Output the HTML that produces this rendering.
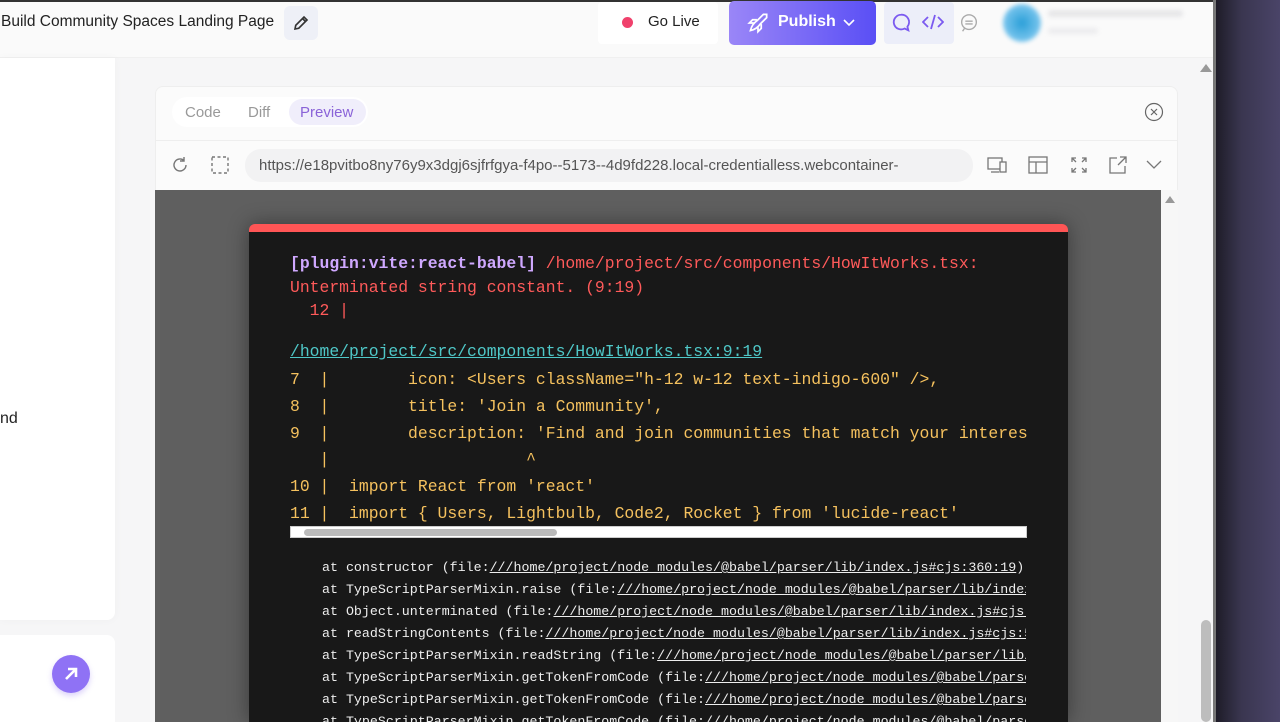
<!DOCTYPE html>
<html><head><meta charset="utf-8"><style>
*{box-sizing:border-box;margin:0;padding:0}
html,body{width:1280px;height:722px;overflow:hidden}
body{background:#f6f6f7;font-family:"Liberation Sans",sans-serif;position:relative}
.abs{position:absolute}
.mono{font-family:"Liberation Mono",monospace;white-space:pre;position:absolute}
u{text-decoration:underline}
</style></head><body>
<!-- top bar -->
<div class="abs" style="left:0;top:0;width:1215px;height:58px;background:#fafafa;border-bottom:1px solid #f0f0f0"></div>
<div class="abs" style="left:0;top:0;width:1215px;height:2px;background:#333"></div>
<div class="abs" style="left:1px;top:13px;font-size:15.5px;color:#222">Build Community Spaces Landing Page</div>
<div class="abs" style="left:284px;top:6px;width:34px;height:34px;border-radius:6px;background:#eef0f7"></div>
<svg class="abs" style="left:292px;top:14px" width="18" height="18" viewBox="0 0 24 24" fill="none" stroke="#333" stroke-width="2.2"><path d="M4 20l1-5L16 4l4 4L9 19z M14 6l4 4"/></svg>
<div class="abs" style="left:598px;top:2px;width:120px;height:42px;background:#fff;border-radius:4px"></div>
<div class="abs" style="left:622px;top:17px;width:11px;height:11px;border-radius:50%;background:#f0416c"></div>
<div class="abs" style="left:648px;top:13px;font-size:15px;color:#222">Go Live</div>
<div class="abs" style="left:729px;top:1px;width:147px;height:44px;border-radius:5px;background:linear-gradient(90deg,#9a86f7,#5a4ff5)"></div>
<svg class="abs" style="left:745px;top:10px" width="26" height="26" viewBox="0 0 24 24" fill="none" stroke="#fff" stroke-width="1.6"><path d="M5 19c1-4 3-7 6-9l6-6 3 0 0 3-6 6c-2 3-5 5-9 6zM8 12l-4 0 3-3 4 0M12 16l0 4 3-3 0-4"/></svg>
<div class="abs" style="left:778px;top:13px;font-size:16px;color:#fff;font-weight:bold">Publish</div>
<svg class="abs" style="left:842px;top:18px" width="14" height="10" viewBox="0 0 14 10" fill="none" stroke="#fff" stroke-width="1.6"><path d="M2 2l5 5 5-5"/></svg>
<div class="abs" style="left:884px;top:2px;width:70px;height:42px;background:#eceef9;border-radius:4px"></div>
<svg class="abs" style="left:890px;top:12px" width="22" height="22" viewBox="0 0 24 24" fill="none" stroke="#7b5af0" stroke-width="2"><path d="M12 3a8 8 0 1 0 4 15l4 2-1-4A8 8 0 0 0 12 3z"/></svg>
<svg class="abs" style="left:922px;top:13px" width="22" height="18" viewBox="0 0 22 18" fill="none" stroke="#7b5af0" stroke-width="1.8"><path d="M6 4L1 9l5 5M16 4l5 5-5 5M13 2L9 16"/></svg>
<svg class="abs" style="left:958px;top:12px" width="22" height="22" viewBox="0 0 24 24" fill="none" stroke="#aaa" stroke-width="1.5"><circle cx="12" cy="11" r="8"/><path d="M8 10h8M8 13h8M7 18l-2 3"/></svg>
<div class="abs" style="left:1003px;top:4px;width:38px;height:38px;border-radius:50%;background:radial-gradient(#2a9fd8,#7cc6ee 70%,transparent 75%);filter:blur(2px)"></div>
<div class="abs" style="left:1048px;top:10px;width:135px;height:7px;background:#e6e6e8;border-radius:4px;filter:blur(2px)"></div>
<div class="abs" style="left:1048px;top:28px;width:50px;height:6px;background:#ececee;border-radius:4px;filter:blur(2px)"></div>
<!-- left cards -->
<div class="abs" style="left:0;top:58px;width:115px;height:562px;background:#fff;border-radius:0 0 8px 0;box-shadow:0 0 10px rgba(0,0,0,.03)"></div>
<div class="abs" style="left:0;top:410px;font-size:16px;color:#222">nd</div>
<div class="abs" style="left:0;top:635px;width:115px;height:90px;background:#fff;border-radius:0 8px 0 0"></div>
<div class="abs" style="left:52px;top:655px;width:38px;height:38px;border-radius:50%;background:#8f72f5;box-shadow:0 3px 6px rgba(140,110,240,.3)"></div>
<svg class="abs" style="left:61px;top:664px" width="20" height="20" viewBox="0 0 20 20" fill="none" stroke="#fff" stroke-width="2.6"><path d="M5 15L15 5M7 5h8v8"/></svg>
<!-- preview panel -->
<div class="abs" style="left:155px;top:86px;width:1023px;height:640px;background:#fbfbfb;border-radius:8px 8px 0 0;border:1px solid #eee"></div>
<div class="abs" style="left:172px;top:97px;width:196px;height:30px;background:#fff;border-radius:15px"></div>
<div class="abs" style="left:289px;top:99px;width:77px;height:26px;background:#f0eefb;border-radius:13px"></div>
<div class="abs" style="left:185px;top:104px;font-size:15px;color:#999">Code</div>
<div class="abs" style="left:248px;top:104px;font-size:15px;color:#999">Diff</div>
<div class="abs" style="left:300px;top:104px;font-size:15px;color:#8a63d8">Preview</div>
<svg class="abs" style="left:1144px;top:102px" width="20" height="20" viewBox="0 0 20 20" fill="none" stroke="#666" stroke-width="1.2"><circle cx="10" cy="10" r="8.5"/><path d="M7 7l6 6M13 7l-6 6"/></svg>
<div class="abs" style="left:156px;top:140px;width:1021px;height:1px;background:#eee"></div>
<svg class="abs" style="left:170px;top:155px" width="20" height="20" viewBox="0 0 20 20" fill="none" stroke="#777" stroke-width="1.4"><path d="M16 10a6 6 0 1 1-2-4.5M14 2v4h-4"/></svg>
<svg class="abs" style="left:211px;top:156px" width="18" height="18" viewBox="0 0 18 18" fill="none" stroke="#777" stroke-width="1.4" stroke-dasharray="3 2.5"><rect x="1" y="1" width="16" height="16"/></svg>
<div class="abs" style="left:245px;top:149px;width:728px;height:33px;background:#f2f2f3;border-radius:16px"></div>
<div class="abs" style="left:259px;top:157px;font-size:15px;color:#555;white-space:nowrap;width:712px;overflow:hidden">https://e18pvitbo8ny76y9x3dgj6sjfrfgya-f4po--5173--4d9fd228.local-credentialless.webcontainer-</div>
<svg class="abs" style="left:986px;top:155px" width="24" height="20" viewBox="0 0 24 20" fill="none" stroke="#777" stroke-width="1.3"><rect x="2" y="3" width="14" height="11"/><rect x="14" y="7" width="6" height="10" fill="#fbfbfb"/><path d="M5 17h8"/></svg>
<svg class="abs" style="left:1028px;top:156px" width="20" height="18" viewBox="0 0 20 18" fill="none" stroke="#777" stroke-width="1.3"><rect x="1" y="1" width="18" height="16"/><path d="M1 6h18M8 6v11"/></svg>
<svg class="abs" style="left:1070px;top:156px" width="18" height="18" viewBox="0 0 18 18" fill="none" stroke="#777" stroke-width="1.3"><path d="M2 6V2h4M2 2l4 4M16 6V2h-4M16 2l-4 4M2 12v4h4M2 16l4-4M16 12v4h-4M16 16l-4-4"/></svg>
<svg class="abs" style="left:1108px;top:155px" width="20" height="20" viewBox="0 0 20 20" fill="none" stroke="#777" stroke-width="1.3"><path d="M9 3H2v15h15v-7M12 2h6v6M18 2l-8 8"/></svg>
<svg class="abs" style="left:1146px;top:160px" width="16" height="10" viewBox="0 0 16 10" fill="none" stroke="#777" stroke-width="1.3"><path d="M1 1l7 7 7-7"/></svg>
<!-- iframe area -->
<div class="abs" style="left:155px;top:190px;width:1006px;height:532px;background:#5f5f5f"></div>
<div class="abs" style="left:1161px;top:190px;width:17px;height:532px;background:#f7f7f7"></div>
<div class="abs" style="left:1165px;top:196px;width:0;height:0;border-left:5px solid transparent;border-right:5px solid transparent;border-bottom:7px solid #999"></div>
<!-- error overlay -->
<div class="abs" style="left:249px;top:224px;width:819px;height:498px;background:#181818;border-top:8px solid #ff5555;border-radius:6px 6px 0 0;box-shadow:0 0 20px rgba(0,0,0,.4)"></div>
<div class="mono" style="left:290px;top:252px;font-size:16.4px;line-height:23.5px;color:#ff5a5a"><span style="color:#cfa8ff;font-weight:bold">[plugin:vite:react-babel]</span> /home/project/src/components/HowItWorks.tsx:
Unterminated string constant. (9:19)
  12 |</div>
<div class="mono" style="left:290px;top:342px;font-size:16.4px;color:#4fc8c8"><u>/home/project/src/components/HowItWorks.tsx:9:19</u></div>
<div class="mono" style="left:290px;top:367px;font-size:16.4px;line-height:26.8px;color:#f5c15e;width:737px;overflow:hidden">7  |        icon: &lt;Users className="h-12 w-12 text-indigo-600" /&gt;,
8  |        title: 'Join a Community',
9  |        description: 'Find and join communities that match your interests'
   |                    ^
10 |  import React from 'react'
11 |  import { Users, Lightbulb, Code2, Rocket } from 'lucide-react'</div>
<div class="abs" style="left:290px;top:526px;width:737px;height:12px;background:#fff;border:1px solid #ccc"></div>
<div class="abs" style="left:304px;top:529px;width:253px;height:7px;background:#bbb;border-radius:4px"></div>
<div class="mono" style="left:322px;top:557px;font-size:13.3px;line-height:22px;color:#eee;width:704px;overflow:hidden">at constructor (file:<u>///home/project/node_modules/@babel/parser/lib/index.js#cjs:360:19</u>)
at TypeScriptParserMixin.raise (file:<u>///home/project/node_modules/@babel/parser/lib/index.js</u>
at Object.unterminated (file:<u>///home/project/node_modules/@babel/parser/lib/index.js#cjs:5</u>
at readStringContents (file:<u>///home/project/node_modules/@babel/parser/lib/index.js#cjs:5</u>
at TypeScriptParserMixin.readString (file:<u>///home/project/node_modules/@babel/parser/lib/ind</u>
at TypeScriptParserMixin.getTokenFromCode (file:<u>///home/project/node_modules/@babel/parser</u>
at TypeScriptParserMixin.getTokenFromCode (file:<u>///home/project/node_modules/@babel/parser</u>
at TypeScriptParserMixin.getTokenFromCode (file:<u>///home/project/node_modules/@babel/parser</u></div>
<!-- right scrollbar -->
<div class="abs" style="left:1196px;top:58px;width:17px;height:664px;background:#f6f6f7"></div>
<div class="abs" style="left:1200px;top:64px;width:0;height:0;border-left:6px solid transparent;border-right:6px solid transparent;border-bottom:8px solid #999"></div>
<div class="abs" style="left:1201px;top:620px;width:10px;height:102px;background:#bdbdbd;border-radius:5px"></div>
<div class="abs" style="left:1213px;top:0;width:3px;height:722px;background:#777"></div>
<div class="abs" style="left:1216px;top:0;width:64px;height:722px;background:linear-gradient(90deg,#1e1c28,#3a3650 40%,#4a4468)"></div>
</body></html>
